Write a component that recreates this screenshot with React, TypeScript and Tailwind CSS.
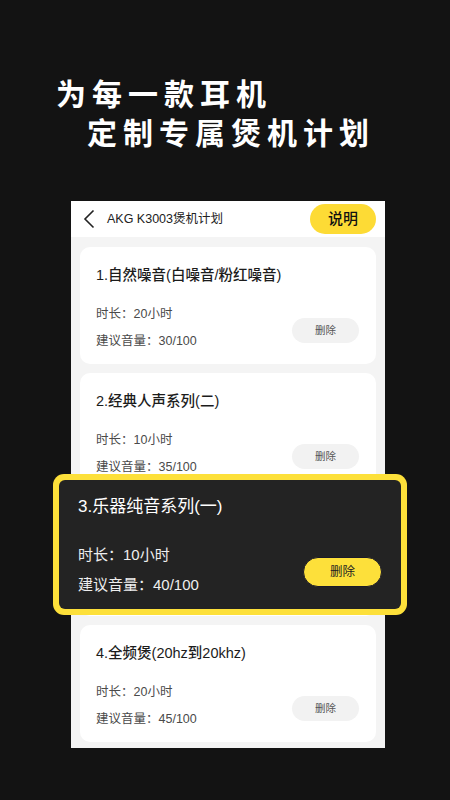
import React from "react";

const FONT = "font-['Liberation_Sans','Noto_Sans_CJK_SC',sans-serif]";

interface Plan {
  title: string;
  hours: string;
  volume: string;
}

const plans: Plan[] = [
  { title: "1.自然噪音(白噪音/粉红噪音)", hours: "20小时", volume: "30/100" },
  { title: "2.经典人声系列(二)", hours: "10小时", volume: "35/100" },
  { title: "3.乐器纯音系列(一)", hours: "10小时", volume: "40/100" },
  { title: "4.全频煲(20hz到20khz)", hours: "20小时", volume: "45/100" },
];

// the focused card is drawn again, bigger, on top; the one in the list is only a placeholder
const PlanCard: React.FC<{ plan: Plan; hidden?: boolean }> = ({ plan, hidden }) => (
  <div className="h-[117px] shrink-0 rounded-[10px] bg-white px-[16px] pt-[18px]">
    {!hidden && (
      <>
        <div className="text-[14.5px] leading-[20px] font-medium text-[#1c1c1c]">
          {plan.title}
        </div>
        <div className="mt-[16px] flex items-center justify-between">
          <div className="text-[12.5px] leading-[27px] text-[#4a4a4a]">
            <div>时长：{plan.hours}</div>
            <div>建议音量：{plan.volume}</div>
          </div>
          <button className="mt-[5px] mr-[1px] h-[25px] w-[67px] rounded-full bg-[#f2f2f2] text-[10.5px] text-[#555]">
            删除
          </button>
        </div>
      </>
    )}
  </div>
);

export default function App() {
  const focus = plans[2];
  return (
    <div className={`relative h-[800px] w-[450px] overflow-hidden bg-[#131313] ${FONT}`}>
      <div className="pt-[73px] font-['Noto_Sans_CJK_SC',sans-serif] text-[30px] leading-[39px] font-bold tracking-[6px] text-white">
        <div className="pl-[56px]">为每一款耳机</div>
        <div className="pl-[87px]">定制专属煲机计划</div>
      </div>

      <div className="mt-[50px] ml-[71px] h-[547px] w-[314px] overflow-hidden bg-[#f4f4f4]">
        <div className="flex h-[36px] items-center bg-white pr-[9px]">
          <svg width="12" height="20" viewBox="0 0 12 20" className="ml-[12px]">
            <path d="M10.5 1.5 L2 10 L10.5 18.5" fill="none" stroke="#222" strokeWidth="1.6" />
          </svg>
          <span className="ml-[12px] text-[12.5px] text-[#222]">AKG K3003煲机计划</span>
          <button className="ml-auto h-[30px] w-[66px] rounded-full bg-[#fddb35] text-[15px] font-medium text-[#111]">
            说明
          </button>
        </div>
        <div className="flex flex-col gap-[9px] px-[9px] pt-[10px]">
          {plans.map((p, i) => (
            <PlanCard key={p.title} plan={p} hidden={i === 2} />
          ))}
        </div>
      </div>

      {/* highlighted card, zoomed over the list */}
      <div className="absolute top-[474px] left-[53px] h-[141px] w-[354px] rounded-[11px] bg-[#fde03a] p-[6px]">
        <div className="flex h-full flex-col rounded-[6px] bg-[#232323] px-[19px] pt-[17px]">
          <div className="text-[17px] leading-[20px] text-white">{focus.title}</div>
          <div className="mt-[23px] flex items-center justify-between">
            <div className="text-[15px] leading-[30px] text-[#eeeeee]">
              <div>时长：{focus.hours}</div>
              <div>建议音量：{focus.volume}</div>
            </div>
            <button className="mt-[4px] h-[30px] w-[79px] rounded-full border-[1.5px] border-[#1a1a28] bg-[#fde03a] text-[12.5px] text-[#222]">
              删除
            </button>
          </div>
        </div>
      </div>
    </div>
  );
}
